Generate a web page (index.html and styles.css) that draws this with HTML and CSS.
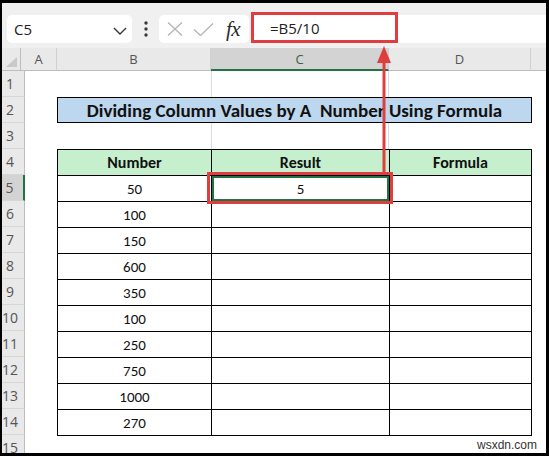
FILE: index.html
```html
<!DOCTYPE html>
<html>
<head>
<meta charset="utf-8">
<link rel="stylesheet" href="styles.css">
</head>
<body>
<div class="frame">
  <div class="toolbar">
    <div class="namebox">
      <span>C5</span>
      <svg class="chev" width="14" height="8" viewBox="0 0 14 8"><polyline points="1,1 7,7 13,1" fill="none" stroke="#333" stroke-width="1.4"/></svg>
    </div>
    <div class="dots">
      <svg width="4" height="16" viewBox="0 0 4 16"><circle cx="2" cy="2" r="1.7" fill="#3a3a3a"/><circle cx="2" cy="8" r="1.7" fill="#3a3a3a"/><circle cx="2" cy="14" r="1.7" fill="#3a3a3a"/></svg>
    </div>
    <div class="fxbox">
      <svg class="ic-x" width="16" height="14" viewBox="0 0 16 14"><path d="M1 0.5 L15 13.5 M15 0.5 L1 13.5" stroke="#b4b4b4" stroke-width="1.3" fill="none"/></svg>
      <svg class="ic-ok" width="21" height="13" viewBox="0 0 21 13"><polyline points="1,6.5 7.5,12.5 20,0.5" fill="none" stroke="#b4b4b4" stroke-width="1.3"/></svg>
      <span class="fx">fx</span>
    </div>
    <div class="formula">
      <div class="hl">=B5/10</div>
    </div>
  </div>

  <div class="sheet">
    <div class="ch corner">
      <svg width="11" height="10" viewBox="0 0 11 10"><polygon points="11,0 11,10 0,10" fill="#c9c9c9"/></svg>
    </div>
    <div class="ch">A</div>
    <div class="ch">B</div>
    <div class="ch sel">C</div>
    <div class="ch">D</div>
    <div class="ch last"></div>

    <div class="rowheads">
      <div class="rh">1</div>
      <div class="rh">2</div>
      <div class="rh">3</div>
      <div class="rh">4</div>
      <div class="rh sel">5</div>
      <div class="rh">6</div>
      <div class="rh">7</div>
      <div class="rh">8</div>
      <div class="rh">9</div>
      <div class="rh">10</div>
      <div class="rh">11</div>
      <div class="rh">12</div>
      <div class="rh">13</div>
      <div class="rh">14</div>
      <div class="rh">15</div>
    </div>

    <div class="gl gl-r1"></div>
    <div class="gl gl-r3"></div>

    <div class="title">Dividing Column Values by A&nbsp; Number Using Formula</div>

    <div class="table">
      <div class="th">Number</div><div class="th">Result</div><div class="th">Formula</div>
      <div class="td">50</div><div class="td selcell">5</div><div class="td"></div>
      <div class="td">100</div><div class="td"></div><div class="td"></div>
      <div class="td">150</div><div class="td"></div><div class="td"></div>
      <div class="td">600</div><div class="td"></div><div class="td"></div>
      <div class="td">350</div><div class="td"></div><div class="td"></div>
      <div class="td">100</div><div class="td"></div><div class="td"></div>
      <div class="td">250</div><div class="td"></div><div class="td"></div>
      <div class="td">750</div><div class="td"></div><div class="td"></div>
      <div class="td">1000</div><div class="td"></div><div class="td"></div>
      <div class="td">270</div><div class="td"></div><div class="td"></div>
    </div>
  </div>

  <div class="redbox"></div>
  <svg class="arrow" width="14" height="127" viewBox="0 0 14 127">
    <polygon points="7,0 0,17 14,17" fill="#e03e3e"/>
    <line x1="7" y1="14" x2="7" y2="127" stroke="#e03e3e" stroke-width="3"/>
  </svg>
  <div class="watermark">wsxdn.com</div>
</div>
</body>
</html>
```

FILE: styles.css
```css
* { box-sizing: border-box; }

body {
  margin: 0;
  background: #000;
}

.frame {
  position: relative;
  width: 549px;
  height: 456px;
  border-style: solid;
  border-color: #000;
  border-width: 3px 3px 3px 2px;
  background: #fff;
  overflow: hidden;
}

/* ---------- toolbar ---------- */
.toolbar {
  height: 45px;
  background: #f0f0f0;
  display: flex;
  align-items: flex-start;
  padding: 12px 0 0 5px;
  font-family: "Open Sans", "Noto Sans", sans-serif;
  color: #222;
}

.namebox {
  width: 125px;
  height: 28px;
  background: #fff;
  border-radius: 5px;
  display: flex;
  align-items: center;
  justify-content: space-between;
  padding: 0 5px 0 7px;
  font-size: 15px;
}

.chev { margin-top: 3px; }

.dots {
  width: 27px;
  height: 28px;
  display: flex;
  align-items: center;
  justify-content: center;
}

.fxbox {
  width: 90px;
  height: 28px;
  background: #fff;
  border-radius: 5px;
  display: flex;
  align-items: center;
  padding-left: 8px;
}

.ic-ok { margin-left: 10px; }

.fx {
  margin-left: 12px;
  font-family: "Liberation Serif", "DejaVu Serif", serif;
  font-style: italic;
  font-size: 21px;
  color: #2a2a2a;
  letter-spacing: -0.5px;
  line-height: 1;
}

.formula {
  flex: 1;
  height: 28px;
  margin-left: 2px;
  background: #fff;
  border-radius: 5px 0 0 5px;
}

.hl {
  width: 147px;
  height: 31px;
  margin-top: -3px;
  border: 3px solid #e03e3e;
  padding-left: 16px;
  display: flex;
  align-items: center;
  font-size: 15px;
}

/* ---------- sheet ---------- */
.sheet {
  display: grid;
  grid-template-columns: 19px 36px 154px 178px 142px 15px;
  grid-template-rows: 23px repeat(15, 26px);
  font-family: Carlito, Lato, "Open Sans", sans-serif;
}

.ch {
  background: #e9e9e9;
  border-right: 1px solid #d0d0d0;
  border-bottom: 1px solid #bdbdbd;
  display: flex;
  align-items: center;
  justify-content: center;
  font-family: "Open Sans", "Noto Sans", sans-serif;
  font-size: 13px;
  color: #555;
}

.ch.corner {
  justify-content: flex-end;
  align-items: flex-end;
  padding: 0 3px 3px 0;
  border-right-color: #bdbdbd;
}

.ch.sel {
  background: #d3d3d3;
  border-bottom: 2px solid #217346;
  color: #3d5e48;
}

.ch.last { border-right: none; }

.rowheads {
  grid-column: 1;
  grid-row: 2 / span 15;
  display: grid;
  grid-auto-rows: 26px;
}

.rh {
  background: #e9e9e9;
  border-right: 1px solid #bdbdbd;
  border-bottom: 1px solid #d6d6d6;
  display: flex;
  align-items: center;
  justify-content: center;
  padding-right: 6px;
  font-family: "Open Sans", "Noto Sans", sans-serif;
  font-size: 14px;
  color: #555;
}

.rh.sel {
  background: #d3d3d3;
  border-right: 2px solid #217346;
}

.gl {
  grid-column: 4;
  border-left: 1px solid #dcdcdc;
  border-right: 1px solid #dcdcdc;
}
.gl-r1 { grid-row: 2; }
.gl-r3 { grid-row: 4; }

.title {
  grid-column: 3 / 6;
  grid-row: 3;
  justify-self: start;
  width: 475px;
  height: 26px;
  border: 1px solid #000;
  background: #bdd7ee;
  display: flex;
  align-items: center;
  justify-content: center;
  font-weight: 700;
  font-size: 19px;
  color: #111;
}

.table {
  grid-column: 3 / 6;
  grid-row: 5 / span 11;
  justify-self: start;
  align-self: start;
  width: 475px;
  height: 287px;
  background: #000;
  padding: 1px;
  display: grid;
  grid-template-columns: 153px 177px 141px;
  grid-auto-rows: 25px;
  gap: 1px;
}

.th, .td {
  display: flex;
  align-items: center;
  justify-content: center;
  background: #fff;
  font-size: 15px;
  color: #111;
}

.th {
  background: #c6efce;
  font-weight: 700;
  font-size: 16px;
}

.selcell {
  box-shadow: inset 0 0 0 2px #217346;
}

/* ---------- overlays ---------- */
.redbox {
  position: absolute;
  left: 205px;
  top: 169px;
  width: 186px;
  height: 32px;
  border: 3px solid #e03e3e;
}

.arrow {
  position: absolute;
  left: 375px;
  top: 43px;
}

.watermark {
  position: absolute;
  right: 9px;
  bottom: 1px;
  font-family: "Liberation Sans", Arial, sans-serif;
  font-size: 12px;
  line-height: 14px;
  color: #333;
}
```
